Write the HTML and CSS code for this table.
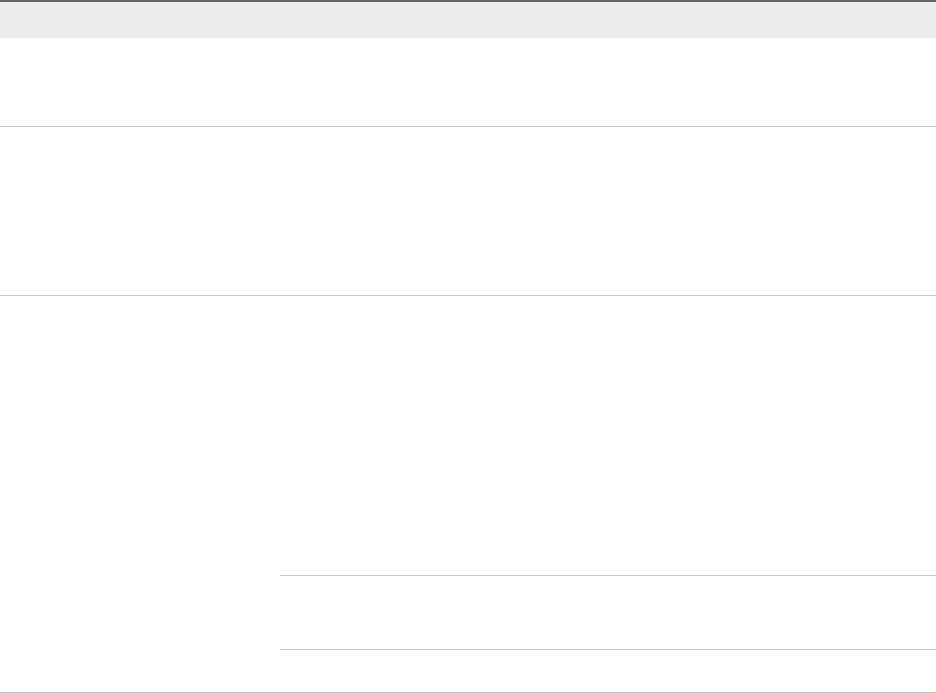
FILE: index.html
```html
<!DOCTYPE html>
<html>
<head>
<meta charset="utf-8">
<link rel="stylesheet" href="styles.css">
</head>
<body>
<div class="table">
  <div class="head"><div class="cell"></div><div class="cell"></div></div>
  <div class="row r1"><div class="cell"></div><div class="cell"></div></div>
  <div class="row r2"><div class="cell"></div><div class="cell"></div></div>
  <div class="row r3">
    <div class="cell"></div>
    <div class="cell nested">
      <div class="sub s1"></div>
      <div class="sub s2"></div>
      <div class="sub s3"></div>
    </div>
  </div>
</div>
</body>
</html>
```
FILE: styles.css
```css
html, body {
  margin: 0;
  padding: 0;
  background: #ffffff;
  font-family: "Liberation Sans", Arial, sans-serif;
}
.table {
  width: 936px;
  display: flex;
  flex-direction: column;
}
.head {
  display: grid;
  grid-template-columns: 270px 1fr;
  border-top: 2px solid #666666;
  height: 36px;
  background: #ececec;
}
.row {
  display: grid;
  grid-template-columns: 270px 1fr;
  border-bottom: 1px solid #c6c6c6;
}
.r1 { height: 88px; }
.r2 { height: 168px; }
.r3 { height: 396px; }
.nested {
  display: flex;
  flex-direction: column;
  padding-left: 10px;
}
.sub { flex: none; }
.s1 { height: 279px; border-bottom: 1px solid #c6c6c6; }
.s2 { height: 73px; border-bottom: 1px solid #c6c6c6; }
.s3 { height: 42px; }
```
